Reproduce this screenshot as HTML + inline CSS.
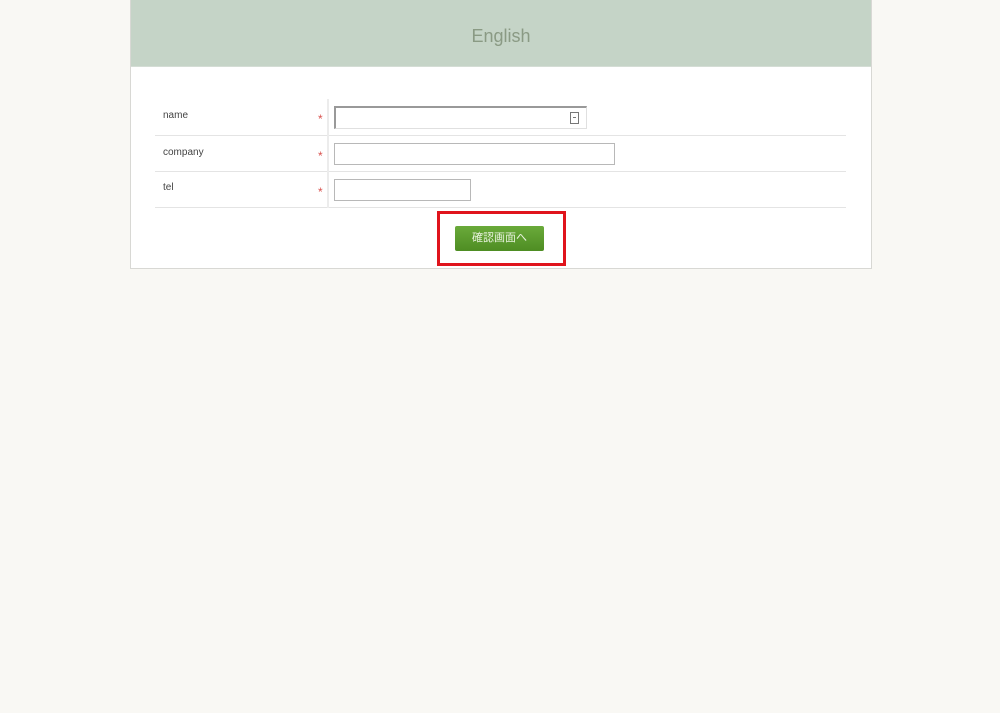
<!DOCTYPE html>
<html><head><meta charset="utf-8"><style>
body{margin:0;background:#f9f8f4;width:1000px;height:713px;position:relative;font-family:"Liberation Sans","Noto Sans CJK JP",sans-serif;}
.box{position:absolute;left:130px;top:0;width:740px;height:268px;background:#fff;border:1px solid #d8d8d4;border-top:none;}
.hd{position:absolute;left:0;top:0;width:740px;height:66px;background:#c5d4c7;border-bottom:1px solid #d4ddd5;color:#8a9a84;font-size:18px;text-align:center;line-height:73px;}
.row{position:absolute;left:155px;width:691px;border-bottom:1px solid #e4e4e4;}
.lab{position:absolute;left:8px;font-size:10px;color:#444;}
.star{position:absolute;left:163px;color:#d9534f;font-size:12px;}
.vl{position:absolute;left:327px;top:99px;width:2px;height:109px;background:#ececec;}
.in{position:absolute;background:#fff;border:1px solid #b8b8b8;}
.btn{position:absolute;left:455px;top:226px;width:89px;height:25px;background:linear-gradient(#6aaa3a,#4e8d23);border-radius:2px;color:#e8f2de;font-size:11px;text-align:center;line-height:25px;}
.red{position:absolute;left:437px;top:211px;width:123px;height:49px;border:3px solid #e0141c;}
</style></head><body>
<div class="box"><div class="hd">English</div></div>
<div class="row" style="top:99px;height:36px"><span class="lab" style="top:11px">name</span><span class="star" style="top:13px">*</span></div>
<div class="row" style="top:136px;height:35px"><span class="lab" style="top:11px">company</span><span class="star" style="top:13px">*</span></div>
<div class="row" style="top:172px;height:35px"><span class="lab" style="top:10px">tel</span><span class="star" style="top:13px">*</span></div>
<div class="vl"></div>
<div class="in" style="left:334px;top:106px;width:250px;height:20px;border-color:#999 #e0e0e0 #e0e0e0 #999;border-width:2px 1px 1px 2px"><div style="position:absolute;right:7px;top:4px;width:7px;height:10px;border:1px solid #777;"><div style="position:absolute;left:2px;top:4px;width:3px;height:1px;background:#777"></div></div></div>
<div class="in" style="left:334px;top:143px;width:279px;height:20px"></div>
<div class="in" style="left:334px;top:179px;width:135px;height:20px"></div>
<div class="btn">確認画面へ</div>
<div class="red"></div>
</body></html>
